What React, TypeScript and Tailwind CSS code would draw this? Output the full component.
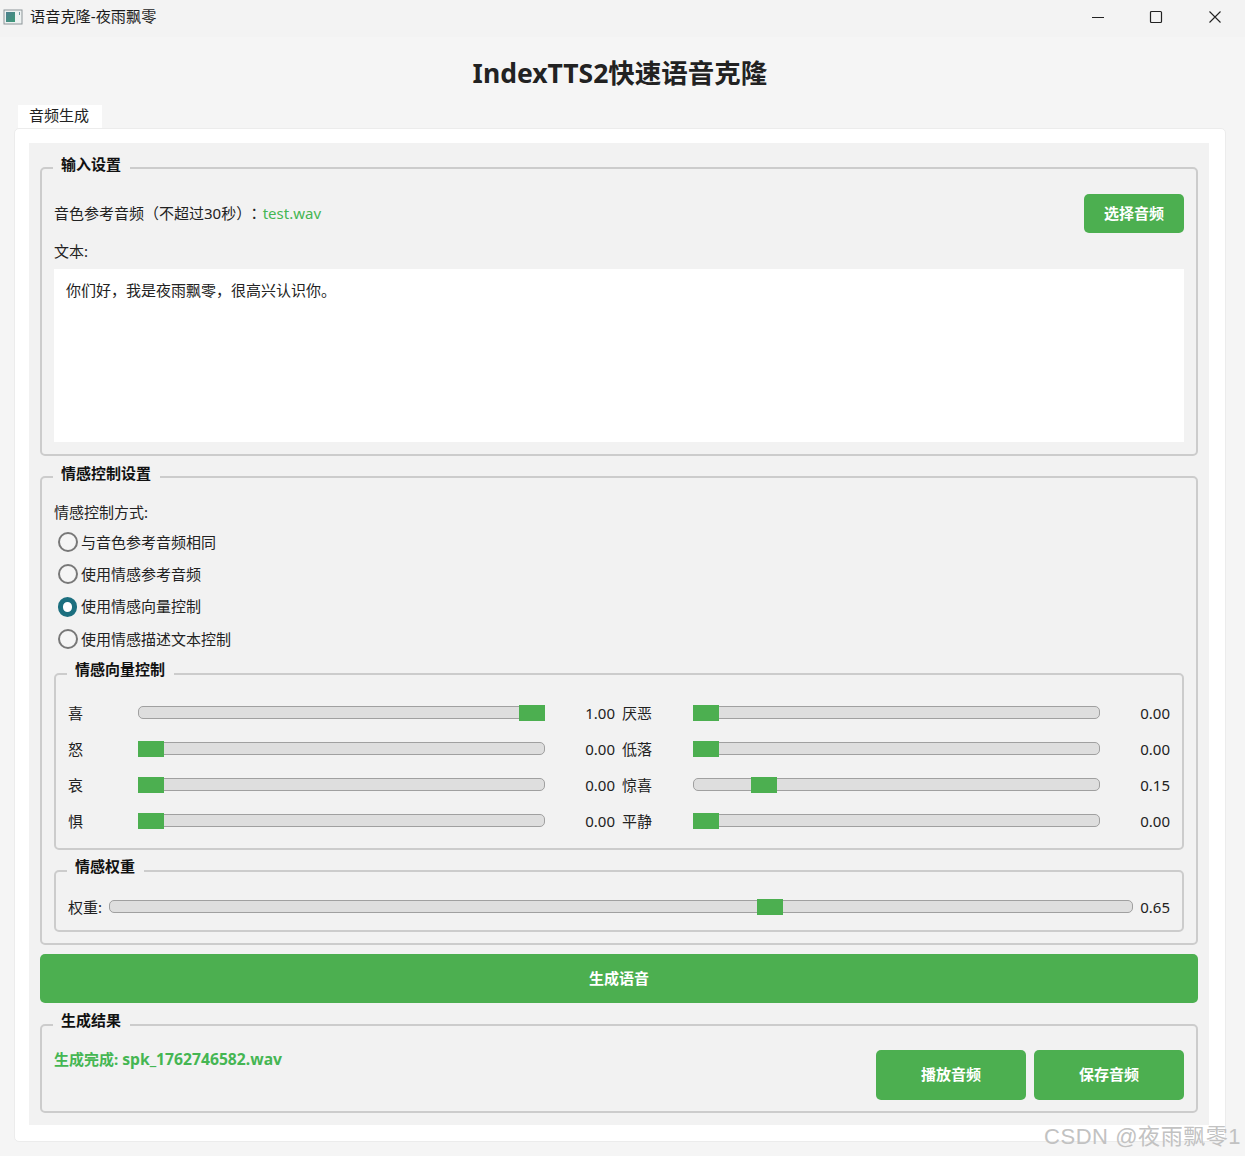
import React from "react";

const FONT = "[font-family:'Noto_Sans','Noto_Sans_CJK_SC',sans-serif]";

function Group({ title, className, titleTop = "top-[-15px]", children }: { title: string; className: string; titleTop?: string; children: React.ReactNode }) {
  return (
    <section className={`relative rounded-[5px] border-2 border-[#cccccc] ${className}`}>
      <h2 className={`absolute left-[11px] h-[20px] bg-[#f2f2f2] pl-2 pr-[9px] text-[15px] leading-[20px] font-bold text-[#111] ${titleTop}`}>
        {title}
      </h2>
      {children}
    </section>
  );
}

function Slider({ value, width, nudge = 0 }: { value: number; width: number; nudge?: number }) {
  const left = Math.floor(value * (width - 26)) + nudge;
  return (
    <div className="relative mb-[2px] h-[13px] w-full rounded-[5px] border border-[#a0a0a0] bg-[#dedede]">
      <div className="absolute top-[-2px] h-[16px] w-[26px] bg-[#4caf50]" style={{ left: left - 1 }} />
    </div>
  );
}

function Radio({ label, checked = false }: { label: string; checked?: boolean }) {
  return (
    <div className="flex flex-1 items-center">
      {checked ? (
        <span className="ml-[4px] mr-[4px] h-[20px] w-[19px] rounded-full border-[5px] border-[#1c6f7f] bg-white" />
      ) : (
        <span className="ml-[4px] mr-[3px] h-[20px] w-[20px] rounded-full border-2 border-[#787878] bg-[#f5f5f5]" />
      )}
      <span>{label}</span>
    </div>
  );
}

const rows: [string, number, string, number][] = [
  ["喜", 1, "厌恶", 0],
  ["怒", 0, "低落", 0],
  ["哀", 0, "惊喜", 0.15],
  ["惧", 0, "平静", 0],
];

function GreenButton({ label, className }: { label: string; className: string }) {
  return (
    <button className={`rounded-[5px] bg-[#4caf50] text-[15px] font-bold text-white ${className}`}>{label}</button>
  );
}

export default function App() {
  return (
    <div className={`relative h-[1156px] w-[1245px] overflow-hidden bg-[#f5f5f5] text-[15px] text-[#222] ${FONT}`}>
      <header className="flex h-[37px] items-center bg-[#f3f3f3] pb-[4px]">
        <svg width="20" height="16" viewBox="0 0 20 16" className="ml-[3px]">
          <defs>
            <linearGradient id="ic" x1="0" y1="0" x2="1" y2="1">
              <stop offset="0" stopColor="#4e7f8f" />
              <stop offset="1" stopColor="#3d9a78" />
            </linearGradient>
          </defs>
          <rect x="1" y="1" width="18" height="14" fill="#eef2f2" stroke="#8d9699" />
          <rect x="3" y="3" width="9" height="10" fill="url(#ic)" />
          <rect x="16" y="3" width="1" height="3" fill="#6f9aa0" />
        </svg>
        <span className="ml-[7px] text-[15.2px] text-[#1c1c1c]">语音克隆-夜雨飘零</span>
        <div className="ml-auto flex items-center">
          <svg width="14" height="14" viewBox="0 0 14 14" className="mr-[44px]">
            <path d="M1 7.5h12" stroke="#222" strokeWidth="1" />
          </svg>
          <svg width="14" height="14" viewBox="0 0 14 14" className="mr-[45px]">
            <rect x="1.5" y="1.5" width="11" height="11" rx="1" fill="none" stroke="#222" strokeWidth="1.2" />
          </svg>
          <svg width="14" height="14" viewBox="0 0 14 14" className="mr-[23px]">
            <path d="M1.5 1.5l11 11M12.5 1.5l-11 11" stroke="#222" strokeWidth="1.1" />
          </svg>
        </div>
      </header>

      <h1 className="flex h-[68px] items-center justify-center pt-[6px] text-[26.5px] font-bold text-[#222]">
        <span className="ml-[-5px]">IndexTTS2快速语音克隆</span>
      </h1>

      <div className="ml-[18px] flex h-[23px] w-[84px] items-center justify-center bg-white pr-[2px] pb-[3px]">音频生成</div>

      <main className="ml-[14px] h-[1014px] w-[1212px] rounded-[5px] border border-[#ececec] bg-white p-[14px]">
        <div className="h-[982px] w-[1180px] bg-[#f2f2f2] px-[11px] pt-[24px]">
          <Group title="输入设置" className="h-[289px] px-[12px] pt-[25px]">
            <div className="flex h-[40px] items-start justify-between">
              <div className="flex h-[38px] items-center">
                <span>
                  音色参考音频（不超过30秒<span className="[font-feature-settings:'halt']">）</span>
                </span>
                <span className="mr-[1px] ml-[3px] [font-family:'Noto_Sans_CJK_TC',sans-serif]">：</span>
                <span className="text-[#45b653]">test.wav</span>
              </div>
              <GreenButton label="选择音频" className="h-[39px] w-[100px] pb-[1px]" />
            </div>
            <div className="mt-[7px] flex h-[20px] items-center">文本:</div>
            <div className="mt-[8px] h-[173px] bg-white px-[12px] py-[9px] text-[15px] leading-[24px]">你们好，我是夜雨飘零，很高兴认识你。</div>
          </Group>

          <Group title="情感控制设置" className="mt-[20px] h-[469px] px-[12px] pt-[23px]">
            <div className="flex h-[25px] items-center pb-[2px]">情感控制方式:</div>
            <div className="flex h-[129px] flex-col">
              <Radio label="与音色参考音频相同" />
              <Radio label="使用情感参考音频" />
              <Radio label="使用情感向量控制" checked />
              <Radio label="使用情感描述文本控制" />
            </div>

            <Group title="情感向量控制" titleTop="top-[-16px]" className="mt-[18px] h-[177px] px-[12px] pt-[20px]">
              <div className="grid grid-cols-[70px_407px_70px_78px_407px_70px] auto-rows-[36px] items-center">
                {rows.map(([a, av, b, bv]) => (
                  <React.Fragment key={a}>
                    <span>{a}</span>
                    <Slider value={av} width={407} />
                    <span className="text-right">{av.toFixed(2)}</span>
                    <span className="pl-[7px]">{b}</span>
                    <Slider value={bv} width={407} nudge={bv === 0.15 ? 1 : 0} />
                    <span className="text-right">{bv.toFixed(2)}</span>
                  </React.Fragment>
                ))}
              </div>
            </Group>

            <Group title="情感权重" titleTop="top-[-16px]" className="mt-[20px] h-[62px] px-[12px] pt-[17px]">
              <div className="grid h-[36px] grid-cols-[41px_1024px_37px] items-center">
                <span>权重:</span>
                <Slider value={0.65} width={1024} />
                <span className="text-right">0.65</span>
              </div>
            </Group>
          </Group>

          <GreenButton label="生成语音" className="mt-[9px] block h-[49px] w-[1158px] pb-[1px]" />

          <Group title="生成结果" titleTop="top-[-16px]" className="mt-[21px] h-[89px] px-[12px]">
            <div className="flex items-start justify-between">
              <div className="mt-[22px] text-[15px] leading-[22px] font-bold text-[#45b653]">
                生成完成: <span className="text-[15.7px]">spk_1762746582.wav</span>
              </div>
              <div className="mt-[24px] flex gap-[8px]">
                <GreenButton label="播放音频" className="h-[50px] w-[150px] pb-[2px]" />
                <GreenButton label="保存音频" className="h-[50px] w-[150px] pb-[2px]" />
              </div>
            </div>
          </Group>
        </div>
      </main>

      <div className="absolute left-[1044px] top-[1121px] text-[22px] leading-[32px] tracking-[0.55px] whitespace-nowrap text-[#c2c2c2] [font-family:'Liberation_Sans','Noto_Sans_CJK_SC',sans-serif]">
        CSDN @夜雨飘零1
      </div>
    </div>
  );
}
